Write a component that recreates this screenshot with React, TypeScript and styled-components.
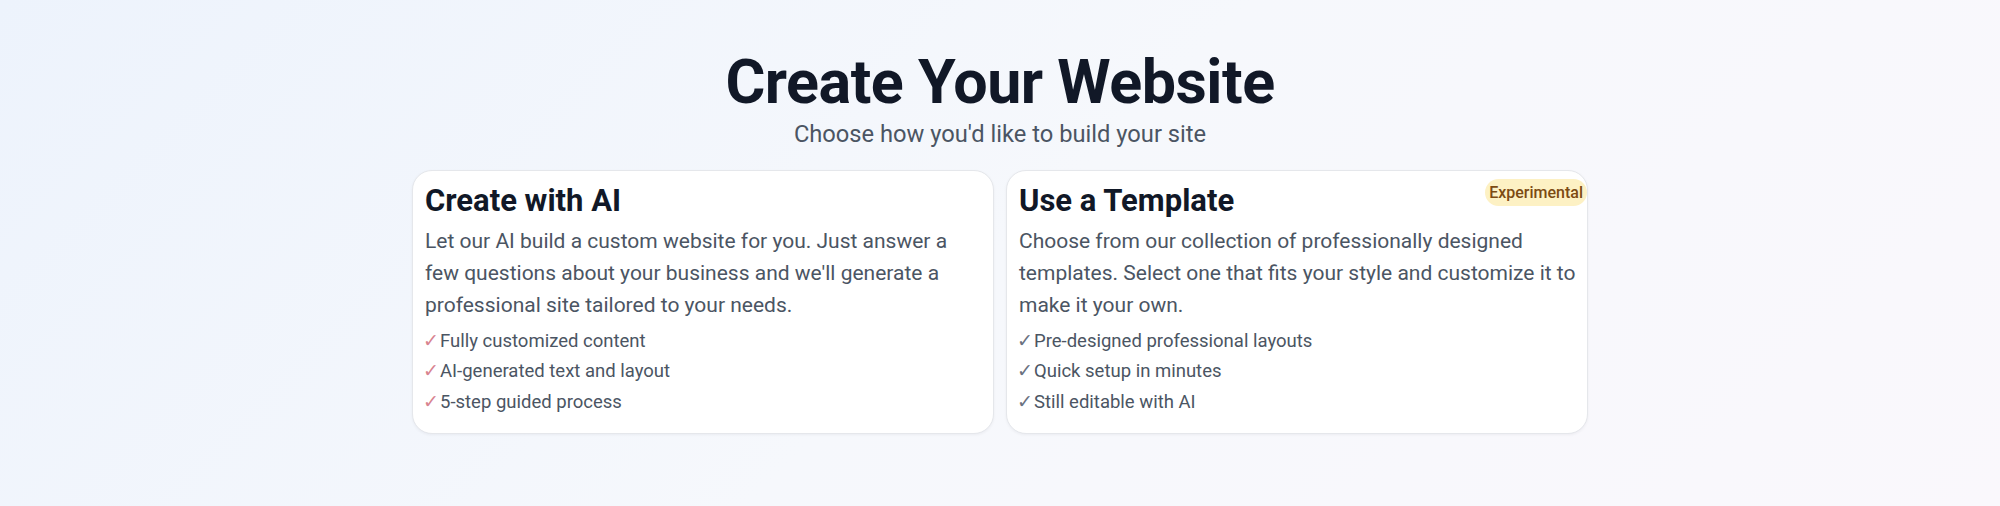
import React from 'react';
import styled, { createGlobalStyle } from 'styled-components';

const GlobalStyle = createGlobalStyle`
  html, body {
    margin: 0;
    padding: 0;
  }
  body {
    font-family: Roboto, 'Liberation Sans', sans-serif;
    background: linear-gradient(135deg, #edf3fc 0%, #f6f8fc 50%, #faf8fc 100%);
    min-height: 100vh;
  }
`;

type Option = {
  title: string;
  description: string;
  features: string[];
  accent: string;
  badge?: string;
};

const options: Option[] = [
  {
    title: 'Create with AI',
    description:
      "Let our AI build a custom website for you. Just answer a few questions about your business and we'll generate a professional site tailored to your needs.",
    features: ['Fully customized content', 'AI-generated text and layout', '5-step guided process'],
    accent: '#d8848f',
  },
  {
    title: 'Use a Template',
    description:
      'Choose from our collection of professionally designed templates. Select one that fits your style and customize it to make it your own.',
    features: ['Pre-designed professional layouts', 'Quick setup in minutes', 'Still editable with AI'],
    accent: '#6b7280',
    badge: 'Experimental',
  },
];

const App: React.FC = () => {
  return (
    <>
      <GlobalStyle />
      <Page>
        <Header>
          <Title>Create Your Website</Title>
          <Subtitle>Choose how you'd like to build your site</Subtitle>
        </Header>

        <Cards>
          {options.map((opt) => (
            <Card key={opt.title}>
              {opt.badge && <Badge>{opt.badge}</Badge>}
              <CardTitle>{opt.title}</CardTitle>
              <CardText>{opt.description}</CardText>
              <Features>
                {opt.features.map((f) => (
                  <Feature key={f}>
                    <Check $color={opt.accent}>✓</Check>
                    {f}
                  </Feature>
                ))}
              </Features>
            </Card>
          ))}
        </Cards>
      </Page>
    </>
  );
};

const Page = styled.div`
  padding: 52px 24px 40px;
  display: flex;
  flex-direction: column;
  align-items: center;
`;

const Header = styled.header`
  text-align: center;
  margin-bottom: 20px;
`;

const Title = styled.h1`
  margin: 0;
  font-size: 61px;
  line-height: 1;
  font-weight: 700;
  letter-spacing: -0.5px;
  color: #111827;
`;

const Subtitle = styled.p`
  margin: 5px 0 0;
  font-size: 23.7px;
  line-height: 32px;
  color: #4b5563;
`;

const Cards = styled.div`
  width: 100%;
  max-width: 1176px;
  display: grid;
  grid-template-columns: 1fr 1fr;
  gap: 12px;
`;

const Card = styled.div`
  position: relative;
  background: #ffffff;
  border: 1px solid #e5e7eb;
  border-radius: 20px;
  padding: 12px 9px 16px 12px;
  box-shadow: 0 1px 3px rgba(15, 23, 42, 0.05);
`;

const Badge = styled.span`
  position: absolute;
  top: 8px;
  right: 0;
  padding: 4px 4px;
  border-radius: 999px;
  background: #fdf1c4;
  color: #7c4a12;
  font-size: 16px;
  line-height: 19px;
  font-weight: 500;
`;

const CardTitle = styled.h2`
  margin: 0 0 6px;
  font-size: 31px;
  line-height: 36px;
  font-weight: 700;
  color: #111827;
`;

const CardText = styled.p`
  margin: 0 0 5px;
  font-size: 21px;
  line-height: 32px;
  color: #4b5563;
`;

const Features = styled.ul`
  list-style: none;
  margin: 0;
  padding: 0;
`;

const Feature = styled.li`
  font-size: 18.5px;
  line-height: 30.4px;
  color: #4b5563;
`;

const Check = styled.span<{ $color: string }>`
  display: inline-block;
  margin-left: -2px;
  margin-right: 1px;
  line-height: 1;
  color: ${(p) => p.$color};
  font-family: 'DejaVu Sans', sans-serif;
  font-weight: 200;
  font-size: 19px;
`;

export default App;
